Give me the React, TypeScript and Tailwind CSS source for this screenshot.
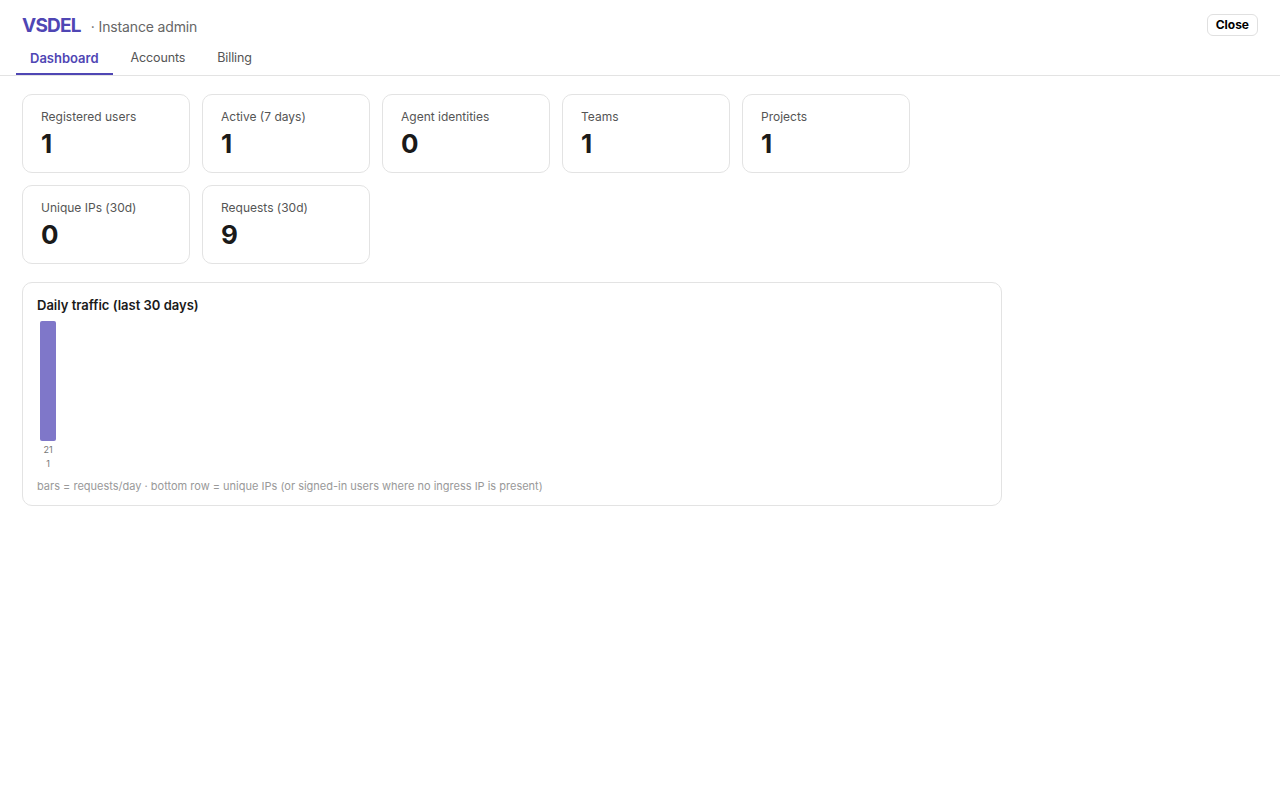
import React from 'react';

const font = { fontFamily: 'Inter, "Noto Sans", "Liberation Sans", sans-serif' };

const topStats = [
  { label: 'Registered users', value: 1 },
  { label: 'Active (7 days)', value: 1 },
  { label: 'Agent identities', value: 0 },
  { label: 'Teams', value: 1 },
  { label: 'Projects', value: 1 },
];

const trafficStats = [
  { label: 'Unique IPs (30d)', value: 0 },
  { label: 'Requests (30d)', value: 9 },
];

const days = [{ requests: 21, ips: 1 }];

function StatCard({ label, value }: { label: string; value: number }) {
  return (
    <div className="w-[168px] rounded-[10px] border border-[#e3e3e3] bg-white px-[18px] pt-[14px] pb-[13px]">
      <div className="text-[12px] leading-4 text-[#555]">{label}</div>
      <div className="mt-[4px] text-[26px] leading-[30px] font-bold text-[#1a1a1a]">{value}</div>
    </div>
  );
}

export default function App() {
  const tabs = ['Dashboard', 'Accounts', 'Billing'];
  const max = Math.max(...days.map((d) => d.requests));

  return (
    <div className="min-h-screen bg-white" style={font}>
      {/* Header */}
      <div className="flex items-start justify-between pl-[22px] pr-[22px] pt-[14px]">
        <div className="flex items-baseline gap-[10px]">
          <span className="text-[19px] leading-6 font-bold tracking-[-0.04em] text-[#4f46b4]">VSDEL</span>
          <span className="text-[14px] tracking-[-0.01em] text-[#666]">· Instance admin</span>
        </div>
        <button className="h-[22px] rounded-[6px] border border-[#e0e0e0] bg-white px-[8px] text-[12px] font-bold leading-none text-black">
          Close
        </button>
      </div>

      {/* Tabs */}
      <div className="mt-[3px] flex gap-[4px] border-b border-[#e3e3e3] px-4">
        {tabs.map((t, i) => (
          <div
            key={t}
            className={
              i === 0
                ? 'border-b-2 border-[#4f46b4] px-[14px] pt-[8px] pb-[6px] text-[13px] leading-[18px] font-semibold text-[#4f46b4]'
                : 'border-b-2 border-transparent px-[14px] pt-[8px] pb-[6px] text-[12.5px] leading-[18px] tracking-[-0.01em] text-[#555]'
            }
          >
            {t}
          </div>
        ))}
      </div>

      {/* Content */}
      <div className="px-[22px] pt-[18px]">
        <div className="flex flex-col gap-[12px]">
          <div className="flex gap-[12px]">
            {topStats.map((s) => (
              <StatCard key={s.label} {...s} />
            ))}
          </div>
          <div className="flex gap-[12px]">
            {trafficStats.map((s) => (
              <StatCard key={s.label} {...s} />
            ))}
          </div>
        </div>

        <div className="mt-[18px] w-[980px] rounded-[10px] border border-[#e3e3e3] bg-white px-[14px] pt-[14px] pb-[12px]">
          <div className="text-[13px] leading-4 font-semibold text-[#1a1a1a]">Daily traffic (last 30 days)</div>
          <div className="mt-[8px] flex items-end gap-[4px]">
            {days.map((d, i) => (
              <div key={i} className="flex w-[22px] flex-col items-center">
                <div className="flex h-[120px] items-end">
                  <div
                    className="w-[16px] rounded-[2px] bg-[#7f77c9]"
                    style={{ height: `${(d.requests / max) * 120}px` }}
                  />
                </div>
                <div className="mt-[2px] text-[9px] leading-[14px] text-[#777]">{d.requests}</div>
                <div className="text-[9px] leading-[14px] text-[#777]">{d.ips}</div>
              </div>
            ))}
          </div>
          <div className="mt-[8px] text-[11px] leading-[14px] text-[#999]">
            bars = requests/day · bottom row = unique IPs (or signed-in users where no ingress IP is present)
          </div>
        </div>
      </div>
    </div>
  );
}
